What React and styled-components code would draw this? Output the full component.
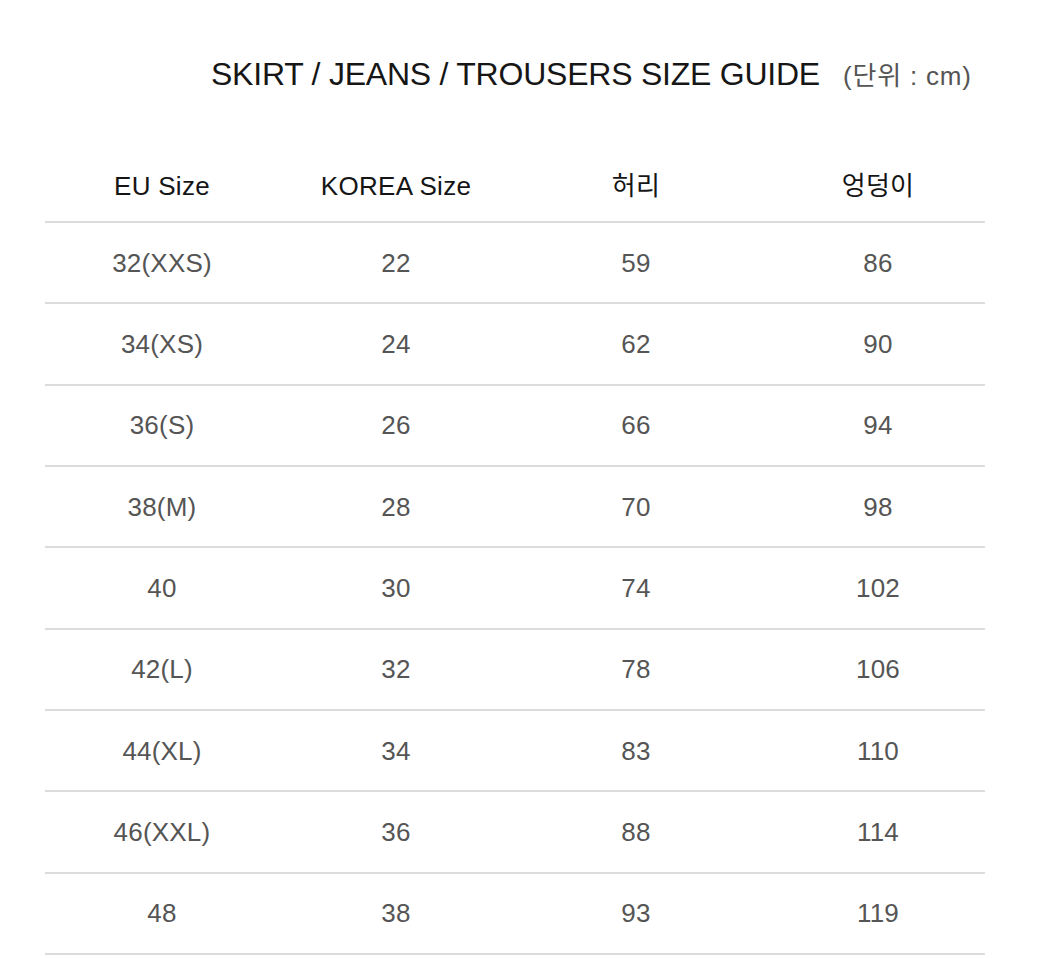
import React from "react";
import styled, { createGlobalStyle } from "styled-components";

const Global = createGlobalStyle`
  html, body { margin: 0; padding: 0; background: #fff; }
  body { font-family: "Liberation Sans", Arial, "Noto Sans CJK KR", sans-serif; }
`;

const Page = styled.div`
  width: 1054px;
  height: 958px;
  background: #fff;
  padding: 0 0 0 45px;
  box-sizing: border-box;
  overflow: hidden;
`;

const TitleBar = styled.div`
  display: flex;
  align-items: baseline;
  width: 940px;
  padding: 54px 0 0 166px;
  height: 168px;
  box-sizing: border-box;
  gap: 23px;
`;

const Title = styled.h1`
  margin: 0;
  font-family: "Liberation Sans", Arial, sans-serif;
  font-weight: 400;
  font-size: 32px;
  line-height: 40px;
  letter-spacing: -0.23px;
  color: #161616;
  white-space: nowrap;
`;

const Unit = styled.span`
  font-family: "Liberation Sans", Arial, "Noto Sans CJK KR", sans-serif;
  font-size: 26px;
  letter-spacing: 0.8px;
  color: #555;
  white-space: nowrap;
`;

const Table = styled.div`
  width: 940px;
`;

const Row = styled.div`
  display: grid;
  grid-template-columns: 234px 234px 246px 226px;
  align-items: center;
  height: ${(p) => (p.$head ? "36px" : "79.35px")};
  padding-bottom: ${(p) => (p.$head ? "17px" : "0")};
  border-bottom: 2px solid #dcdcdc;
`;

const Cell = styled.div`
  text-align: center;
  font-family: "Liberation Sans", Arial, "Noto Sans CJK KR", sans-serif;
  font-size: 26px;
  line-height: 30px;
  letter-spacing: ${(p) => (p.$head ? "0.3px" : "0.2px")};
  color: ${(p) => (p.$head ? "#151515" : "#555")};
  padding-left: ${(p) => (p.$last ? "12px" : "0")};
`;

const head = ["EU Size", "KOREA Size", "허리", "엉덩이"];
const rows = [
  ["32(XXS)", "22", "59", "86"],
  ["34(XS)", "24", "62", "90"],
  ["36(S)", "26", "66", "94"],
  ["38(M)", "28", "70", "98"],
  ["40", "30", "74", "102"],
  ["42(L)", "32", "78", "106"],
  ["44(XL)", "34", "83", "110"],
  ["46(XXL)", "36", "88", "114"],
  ["48", "38", "93", "119"],
];

export default function App() {
  return (
    <Page>
      <Global />
      <TitleBar>
        <Title>SKIRT / JEANS / TROUSERS SIZE GUIDE</Title>
        <Unit>(단위 : cm)</Unit>
      </TitleBar>
      <Table>
        <Row $head>
          {head.map((h, i) => (
            <Cell key={i} $head $last={i === 3}>
              {h}
            </Cell>
          ))}
        </Row>
        {rows.map((r, ri) => (
          <Row key={ri}>
            {r.map((c, i) => (
              <Cell key={i} $last={i === 3}>
                {c}
              </Cell>
            ))}
          </Row>
        ))}
      </Table>
    </Page>
  );
}
